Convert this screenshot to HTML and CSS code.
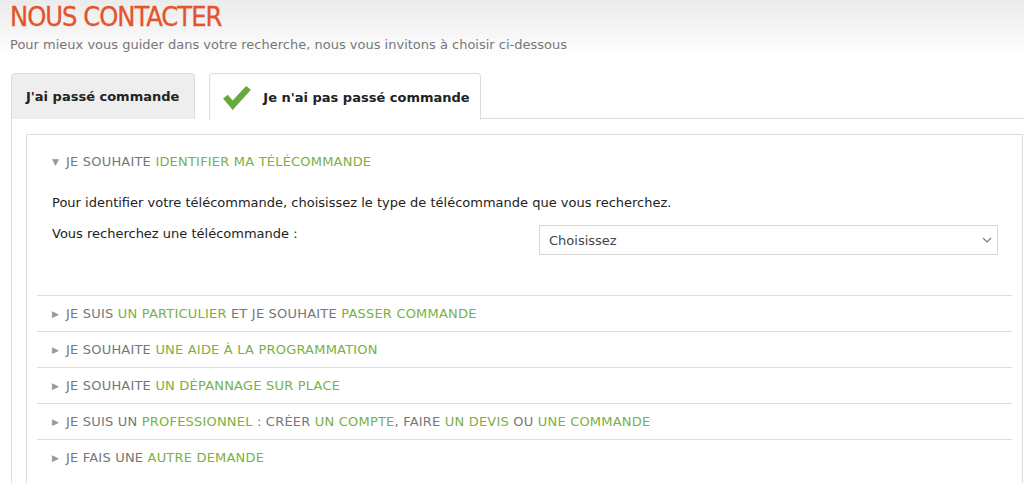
FILE: index.html
```html
<!DOCTYPE html>
<html lang="fr">
<head>
    <meta charset="UTF-8">
    <meta name="viewport" content="width=device-width, initial-scale=1.0">
    <title>Nous contacter</title>
    <link rel="stylesheet" href="styles.css">
</head>
<body>
    <!-- En-tête -->
    <div class="header">
        <h1>NOUS CONTACTER</h1>
        <p class="intro">Pour mieux vous guider dans votre recherche, nous vous invitons à choisir ci-dessous</p>
    </div>

    <!-- Onglets -->
    <div class="tabs">
        <div class="tab">J'ai passé commande</div>
        <div class="tab active">
            <svg class="check" width="28" height="25" viewBox="0 0 29 26">
                <polygon points="0,13 5,9 10,15 24,0 29,4 10,25" fill="#69a83f"/>
            </svg>
            Je n'ai pas passé commande
        </div>
        <div class="tab-fill"></div>
    </div>

    <div class="panel">
        <div class="box">
            <div class="section open">
                <div class="section-title"><span class="arrow">&#9660;</span>JE SOUHAITE <em>IDENTIFIER MA TÉLÉCOMMANDE</em></div>
                <p class="text">Pour identifier votre télécommande, choisissez le type de télécommande que vous recherchez.</p>
                <div class="field">
                    <label>Vous recherchez une télécommande :</label>
                    <div class="select-wrap">
                        <select>
                            <option>Choisissez</option>
                        </select>
                        <svg class="chevron" width="10" height="6" viewBox="0 0 10 6">
                            <polyline points="1,1 5,5 9,1" fill="none" stroke="#777" stroke-width="1.2"/>
                        </svg>
                    </div>
                </div>
            </div>
            <div class="section">
                <div class="section-title"><span class="arrow">&#9654;</span>JE SUIS <em>UN PARTICULIER</em> ET JE SOUHAITE <em>PASSER COMMANDE</em></div>
            </div>
            <div class="section">
                <div class="section-title"><span class="arrow">&#9654;</span>JE SOUHAITE <em>UNE AIDE À LA PROGRAMMATION</em></div>
            </div>
            <div class="section">
                <div class="section-title"><span class="arrow">&#9654;</span>JE SOUHAITE <em>UN DÉPANNAGE SUR PLACE</em></div>
            </div>
            <div class="section">
                <div class="section-title"><span class="arrow">&#9654;</span>JE SUIS UN <em>PROFESSIONNEL</em> : CRÉER <em>UN COMPTE</em>, FAIRE <em>UN DEVIS</em> OU <em>UNE COMMANDE</em></div>
            </div>
            <div class="section">
                <div class="section-title"><span class="arrow">&#9654;</span>JE FAIS UNE <em>AUTRE DEMANDE</em></div>
            </div>
        </div>
    </div>
</body>
</html>
```

FILE: styles.css
```css
body {
    font-family: "DejaVu Sans", Verdana, sans-serif;
    font-size: 13px;
    color: #222;
    background-color: #fff;
    margin: 0;
    overflow: hidden;
}
.header {
    background: linear-gradient(to bottom, #ebebeb, #fff);
    padding: 2px 10px 6px;
    height: 50px;
}
h1 {
    font-family: "DejaVu Sans Condensed", "Liberation Sans Narrow", sans-serif;
    font-weight: normal;
    font-size: 27px;
    color: #e5532b;
    margin: 0;
    line-height: 30px;
    letter-spacing: -1px;
    -webkit-text-stroke: 0.3px #e5532b;
}
.intro {
    margin: 4px 0 0;
    color: #777;
    line-height: 18px;
}
.tabs {
    display: flex;
    align-items: flex-end;
    margin: 14px 0 0 11px;
    height: 47px;
}
.tab {
    display: flex;
    align-items: center;
    height: 45px;
    padding: 0 15px 0 14px;
    background-color: #eee;
    border: 1px solid #ddd;
    border-bottom: none;
    border-radius: 4px 4px 0 0;
    font-weight: bold;
    color: #222;
    white-space: nowrap;
}
.tab.active {
    background-color: #fff;
    margin-left: 14px;
    height: 46px;
    padding: 0 10px 0 13px;
    position: relative;
    bottom: -1px;
}
.check {
    margin: 3px 12px 0 0;
}
.tab-fill {
    flex: 1;
    border-bottom: 1px solid #ddd;
}
.panel {
    margin-left: 11px;
    border-left: 1px solid #ddd;
    padding: 15px 0 0 14px;
    height: 400px;
}
.box {
    border: 1px solid #ddd;
    width: 997px;
    padding: 0 10px;
    box-sizing: border-box;
    height: 400px;
}
.section {
    border-bottom: 1px solid #ddd;
    width: 975px;
}
.section-title {
    height: 35px;
    line-height: 35px;
    padding-left: 15px;
    color: #777;
    white-space: nowrap;
    letter-spacing: 0.2px;
}
.section-title em {
    font-style: normal;
    color: #79b142;
}
.arrow {
    font-size: 9px;
    color: #999;
    display: inline-block;
    width: 14px;
    vertical-align: 1px;
}
.open .section-title {
    height: 54px;
    line-height: 54px;
}
.text {
    margin: 5px 0 0 15px;
    line-height: 18px;
}
.field {
    display: flex;
    align-items: center;
    justify-content: space-between;
    margin: 13px 15px 0 15px;
    height: 30px;
    padding-bottom: 40px;
}
.field label {
    align-self: flex-start;
    line-height: 18px;
}
.select-wrap {
    position: relative;
    margin-right: -1px;
}
select {
    display: block;
    width: 459px;
    height: 30px;
    font-family: "DejaVu Sans", Verdana, sans-serif;
    font-size: 13px;
    color: #444;
    background-color: #fff;
    border: 1px solid #d6d6d6;
    border-radius: 0;
    padding: 0 9px;
    appearance: none;
    -webkit-appearance: none;
}
.chevron {
    position: absolute;
    right: 6px;
    top: 12px;
    pointer-events: none;
}
.box .section:last-child {
    border-bottom: none;
}
```
